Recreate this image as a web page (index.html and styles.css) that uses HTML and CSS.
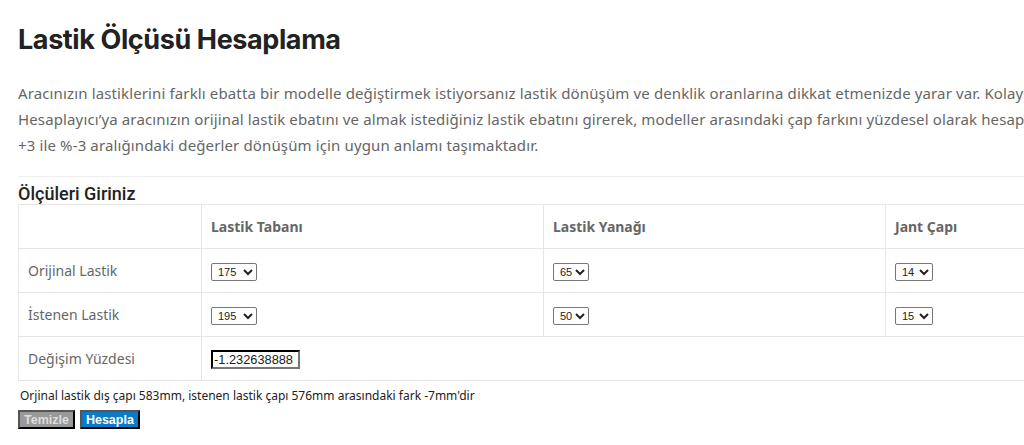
FILE: index.html
```html
<!DOCTYPE html>
<html lang="tr">
<head>
<meta charset="utf-8">
<title>Lastik Ölçüsü Hesaplama</title>
<link rel="stylesheet" href="styles.css">
</head>
<body>
<div class="page">
  <h1 class="title">Lastik Ölçüsü Hesaplama</h1>
  <p class="intro">Aracınızın lastiklerini farklı ebatta bir modelle değiştirmek istiyorsanız lastik dönüşüm ve denklik oranlarına dikkat etmenizde yarar var. KolayOfis Lastik Ölçüsü<br>Hesaplayıcı’ya aracınızın orijinal lastik ebatını ve almak istediğiniz lastik ebatını girerek, modeller arasındaki çap farkını yüzdesel olarak hesaplayabilirsiniz. Genel olarak %<br>+3 ile %-3 aralığındaki değerler dönüşüm için uygun anlamı taşımaktadır.</p>
  <hr class="divider">
  <h2 class="subtitle">Ölçüleri Giriniz</h2>
  <table class="calc">
    <tr class="head">
      <th class="c1"></th>
      <th class="c2">Lastik Tabanı</th>
      <th class="c3">Lastik Yanağı</th>
      <th class="c4">Jant Çapı</th>
    </tr>
    <tr>
      <td class="label">Orijinal Lastik</td>
      <td><select class="sel sel-3"><option>175</option></select></td>
      <td><select class="sel sel-2"><option>65</option></select></td>
      <td><select class="sel sel-j"><option>14</option></select></td>
    </tr>
    <tr>
      <td class="label">İstenen Lastik</td>
      <td><select class="sel sel-3"><option>195</option></select></td>
      <td><select class="sel sel-2"><option>50</option></select></td>
      <td><select class="sel sel-j"><option>15</option></select></td>
    </tr>
    <tr>
      <td class="label">Değişim Yüzdesi</td>
      <td colspan="3"><input class="result" type="text" value="-1.232638888"></td>
    </tr>
  </table>
  <p class="note">Orjinal lastik dış çapı 583mm, istenen lastik çapı 576mm arasındaki fark -7mm'dir</p>
  <div class="buttons">
    <button class="btn btn-clear">Temizle</button>
    <button class="btn btn-calc">Hesapla</button>
  </div>
</div>
</body>
</html>
```

FILE: styles.css
```css
html, body {
  margin: 0;
  padding: 0;
  overflow: hidden;
  background: #fff;
}
.page {
  width: 1240px;
  padding: 22px 0 0 18px;
  font-family: "Noto Sans", "Liberation Sans", sans-serif;
  color: #666;
}
.title {
  margin: 0;
  font-family: Inter, "Liberation Sans", sans-serif;
  font-weight: 700;
  font-size: 27px;
  line-height: 36px;
  color: #222;
  letter-spacing: -0.4px;
}
.intro {
  margin: 22px 0 0;
  font-size: 15px;
  line-height: 26px;
  letter-spacing: 0.13px;
  color: #666;
  white-space: nowrap;
}
.divider {
  margin: 18px 0 0;
  border: 0;
  border-top: 1px solid #eee;
  width: 1210px;
}
.subtitle {
  margin: 7px 0 0;
  font-family: Roboto, "Liberation Sans", Arial, sans-serif;
  font-weight: 500;
  font-size: 18px;
  line-height: 20px;
  color: #222;
}
.calc {
  border-collapse: collapse;
  width: 1209px;
  margin-top: 0;
}
.calc th, .calc td {
  border: 1px solid #e6e6e6;
  height: 43px;
  padding: 0 9px;
  text-align: left;
  font-size: 14px;
  color: #666;
}
.calc th {
  font-weight: 700;
  font-size: 14px;
}
.c1 { width: 164px; }
.c2 { width: 323px; }
.c3 { width: 323px; }
.label {
  font-size: 14.5px;
}
.sel {
  font-family: "Liberation Sans", Arial, sans-serif;
  font-size: 11px;
  height: 18px;
  padding: 0 0 0 2px;
  border: 1px solid #777;
  border-radius: 2px;
  background: #fff;
  color: #222;
}
.sel-3 { width: 46px; }
.sel-2 { width: 36px; }
.sel-j { width: 38px; }
.result {
  font-family: "Liberation Sans", Arial, sans-serif;
  font-size: 12.8px;
  width: 83px;
  height: 15px;
  padding: 0 1px;
  border: 2px inset #222;
  color: #222;
}
.note {
  margin: 8px 0 0 2px;
  font-family: "Noto Sans", "Liberation Sans", sans-serif;
  font-size: 12px;
  line-height: 14px;
  color: #222;
}
.buttons {
  display: flex;
  gap: 5px;
  margin-top: 7px;
}
.btn {
  font-family: "Liberation Sans", Arial, sans-serif;
  font-weight: 700;
  font-size: 12.5px;
  height: 19px;
  padding: 0 4px;
  border: 2px outset #555;
  color: #fff;
  cursor: pointer;
}
.btn-clear {
  background: #999;
  color: #ddd;
}
.btn-calc {
  background: #0a7bc4;
}
```
